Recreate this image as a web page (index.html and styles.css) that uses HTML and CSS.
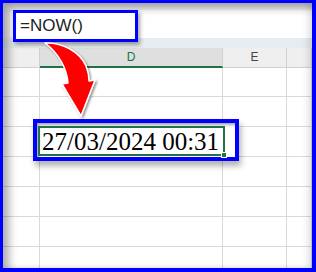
FILE: index.html
```html
<!DOCTYPE html>
<html>
<head>
<meta name="viewport" content="width=device-width, initial-scale=1.0">
<title>NOW function</title>
<link rel="stylesheet" href="styles.css">
</head>
<body>

<div class="frame">
    <div class="formula-bar">
        <div class="fx-input">
            <div class="now-box">=NOW()</div>
        </div>
    </div>
    <div class="name-strip"></div>

    <div class="sheet">
        <div class="head corner"></div>
        <div class="head col-d">D</div>
        <div class="head col-e">E</div>
        <div class="head col-f"></div>

        <div class="cell first"></div><div class="cell first"></div><div class="cell first"></div><div class="cell first"></div>
        <div class="cell"></div><div class="cell"></div><div class="cell"></div><div class="cell"></div>
        <div class="cell"></div><div class="cell"></div><div class="cell"></div><div class="cell"></div>
        <div class="cell"></div><div class="cell"></div><div class="cell"></div><div class="cell"></div>
        <div class="cell"></div><div class="cell"></div><div class="cell"></div><div class="cell"></div>
        <div class="cell"></div><div class="cell"></div><div class="cell"></div><div class="cell"></div>
        <div class="cell"></div><div class="cell"></div><div class="cell"></div><div class="cell"></div>
    </div>

    <div class="date-box">
        <div class="date-cell">27/03/2024 00:31<span class="handle"></span></div>
    </div>

    <svg class="arrow" width="64" height="84" viewBox="40 40 64 84">
        <defs>
            <filter id="shade" x="-30%" y="-30%" width="160%" height="160%">
                <feDropShadow dx="1.5" dy="1.5" stdDeviation="1.2" flood-color="#000" flood-opacity="0.45"/>
            </filter>
        </defs>
        <path d="M45,43 C62,42 80,52 86,66 C88,71 89,76 89,81 L95,80 L81,116 L62,84 L68,83 C67,70 60,54 45,43 Z"
              fill="#ff0000" stroke="#fff" stroke-width="1.5" stroke-linejoin="round" filter="url(#shade)"/>
    </svg>
</div>

</body>
</html>
```

FILE: styles.css
```css
* {
    box-sizing: border-box;
}
body {
    margin: 0;
    font-family: "Liberation Sans", Arial, sans-serif;
}
.frame {
    position: relative;
    width: 316px;
    height: 272px;
    border: 3px solid #0000ff;
    border-right-width: 4px;
    border-bottom-width: 4px;
    background: #fff;
    overflow: hidden;
}
.frame::after {
    content: "";
    position: absolute;
    top: 0;
    left: 0;
    right: 0;
    bottom: 0;
    pointer-events: none;
    box-shadow: inset 6px 5px 8px rgba(0, 0, 0, 0.32), inset -4px 0 6px rgba(0, 0, 0, 0.12);
}

.formula-bar {
    height: 35px;
    padding: 7px 0 0 7px;
    background: #f1f1f1;
}
.fx-input {
    display: flex;
    height: 28px;
    background: #fff;
    border-radius: 4px 0 0 4px;
}
.now-box {
    position: relative;
    z-index: 1;
    margin-left: 3px;
    width: 125px;
    height: 32px;
    border: 3px solid #0000ff;
    background: #fff;
    padding-left: 4px;
    font-size: 17px;
    line-height: 26px;
    color: #222;
    box-shadow: 2px 3px 4px rgba(0, 0, 0, 0.35);
}
.name-strip {
    height: 10px;
    background: #e6ecef;
}

.sheet {
    display: grid;
    grid-template-columns: 37px 183px 64px 25px;
    grid-template-rows: 20px 29px repeat(6, 30px);
}
.head {
    background: #efefef;
    border-right: 1px solid #d0d0d0;
    border-bottom: 1px solid #d0d0d0;
    font-size: 12px;
    text-align: center;
    line-height: 19px;
    color: #444;
}
.head.col-d {
    background: #dfdfdf;
    color: #217346;
    border-bottom: 2px solid #217346;
    line-height: 18px;
}
.cell {
    border-right: 1px solid #d9d9d9;
    border-bottom: 1px solid #d9d9d9;
}

.date-box {
    position: absolute;
    left: 30px;
    top: 116px;
    width: 206px;
    height: 42px;
    border: 4px solid #0000ff;
    background: #fff;
    padding: 3px 0 0 1px;
    box-shadow: inset 2px 2px 3px rgba(0, 0, 0, 0.35), 2px 5px 6px rgba(0, 0, 0, 0.3);
}
.date-cell {
    position: relative;
    width: 187px;
    height: 30px;
    border: 2px solid #217346;
    padding-left: 2px;
    font-family: "Liberation Serif", "Times New Roman", serif;
    font-size: 25px;
    line-height: 28px;
    color: #000;
}
.handle {
    position: absolute;
    right: -4px;
    bottom: -4px;
    width: 6px;
    height: 6px;
    background: #217346;
    border: 1px solid #fff;
}

.arrow {
    position: absolute;
    left: 37px;
    top: 37px;
    z-index: 2;
}
```
